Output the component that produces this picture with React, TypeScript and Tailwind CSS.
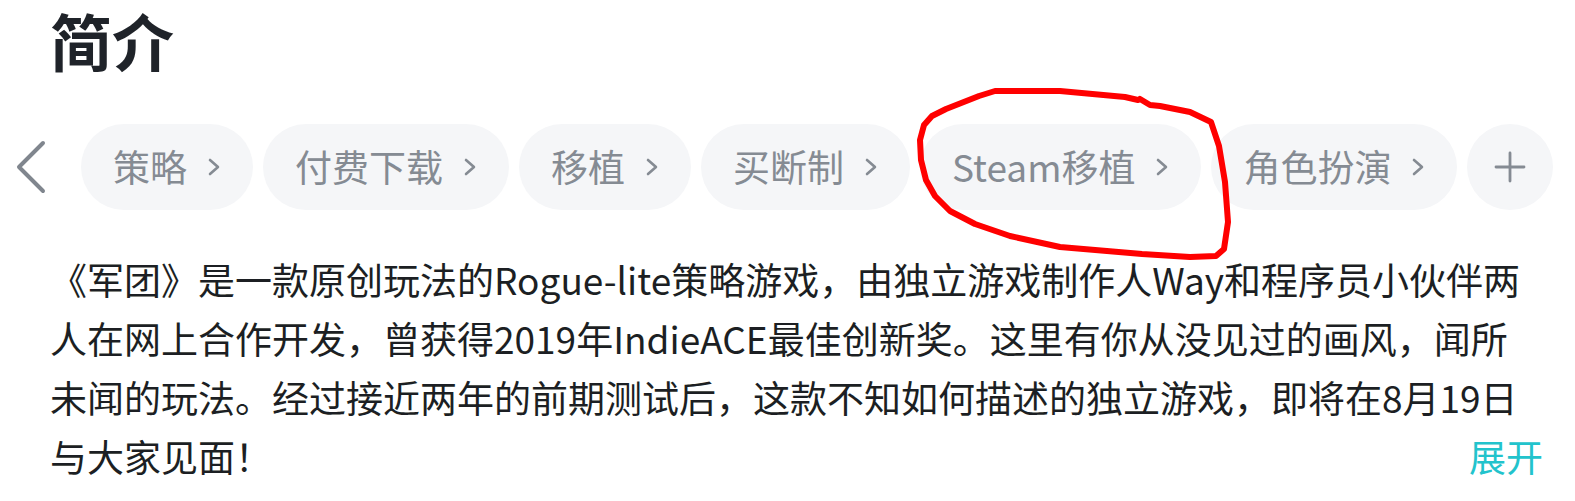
import React from "react";

const tags = ["策略", "付费下载", "移植", "买断制", "Steam移植", "角色扮演"];

const lines = [
  "《军团》是一款原创玩法的Rogue-lite策略游戏，由独立游戏制作人Way和程序员小伙伴两",
  "人在网上合作开发，曾获得2019年IndieACE最佳创新奖。这里有你从没见过的画风，闻所",
  "未闻的玩法。经过接近两年的前期测试后，这款不知如何描述的独立游戏，即将在8月19日",
];

// hand-drawn red loop over the "Steam移植" tag
const loop = [
  [1140, 99], [1150, 105], [1160, 106], [1190, 112], [1211, 122], [1219, 146],
  [1225, 182], [1228, 222], [1224, 249], [1216, 256], [1190, 257], [1142, 254],
  [1060, 247], [1010, 236], [975, 224], [950, 211], [935, 196], [926, 180],
  [921, 160], [920, 140], [924, 125], [932, 116], [946, 109], [979, 96],
  [995, 91], [1060, 91], [1125, 97], [1138, 100],
];

function Chevron() {
  return (
    <svg width="14" height="22" viewBox="0 0 14 22" className="shrink-0">
      <polyline
        points="3,4 11,11 3,18"
        fill="none"
        stroke="#858b93"
        strokeWidth="2.6"
        strokeLinecap="round"
        strokeLinejoin="round"
      />
    </svg>
  );
}

export default function App() {
  const path = loop.map(([x, y], i) => `${i === 0 ? "M" : "L"}${x} ${y}`).join(" ");

  return (
    <div
      className="relative w-[1575px] h-[501px] bg-white overflow-hidden"
      style={{ fontFamily: '"Noto Sans CJK SC", "Noto Sans", sans-serif' }}
    >
      {/* Title */}
      <h1 className="pl-[50px] h-[84px] text-[62px] leading-[80px] font-bold text-[#1f2329]">
        简介
      </h1>

      {/* Tags row */}
      <div className="flex items-center mt-[40px] pl-[15px] h-[86px]">
        <svg width="32" height="54" viewBox="0 0 32 54" className="shrink-0">
          <polyline
            points="28,3 4,27 28,51"
            fill="none"
            stroke="#80868e"
            strokeWidth="4"
            strokeLinecap="round"
            strokeLinejoin="round"
          />
        </svg>
        <div className="flex items-center gap-[10px] ml-[34px]">
          {tags.map((t) => (
            <div
              key={t}
              className="flex items-center gap-[20px] h-[86px] px-[32px] rounded-full bg-[#f5f6f8] text-[37px] text-[#858b93] whitespace-nowrap"
            >
              <span>{t}</span>
              <Chevron />
            </div>
          ))}
          <div className="flex items-center justify-center w-[86px] h-[86px] rounded-full bg-[#f5f6f8] shrink-0">
            <svg width="32" height="32" viewBox="0 0 32 32">
              <path d="M16 2 V30 M2 16 H30" stroke="#858b93" strokeWidth="2.8" strokeLinecap="round" />
            </svg>
          </div>
        </div>
      </div>

      {/* Description */}
      <div className="mt-[40px] pl-[50px] pr-[32px] text-[37px] leading-[59px] text-[#1c1f23]">
        {lines.map((l) => (
          <div key={l} className="whitespace-nowrap">
            {l}
          </div>
        ))}
        <div className="flex justify-between whitespace-nowrap">
          <span>与大家见面！</span>
          <span className="text-[#22c3cc]">展开</span>
        </div>
      </div>

      {/* annotation */}
      <svg
        className="absolute left-0 top-0 pointer-events-none"
        width="1575"
        height="501"
        viewBox="0 0 1575 501"
      >
        <path
          d={path}
          fill="none"
          stroke="#ff0000"
          strokeWidth="6"
          strokeLinecap="round"
          strokeLinejoin="round"
        />
      </svg>
    </div>
  );
}
